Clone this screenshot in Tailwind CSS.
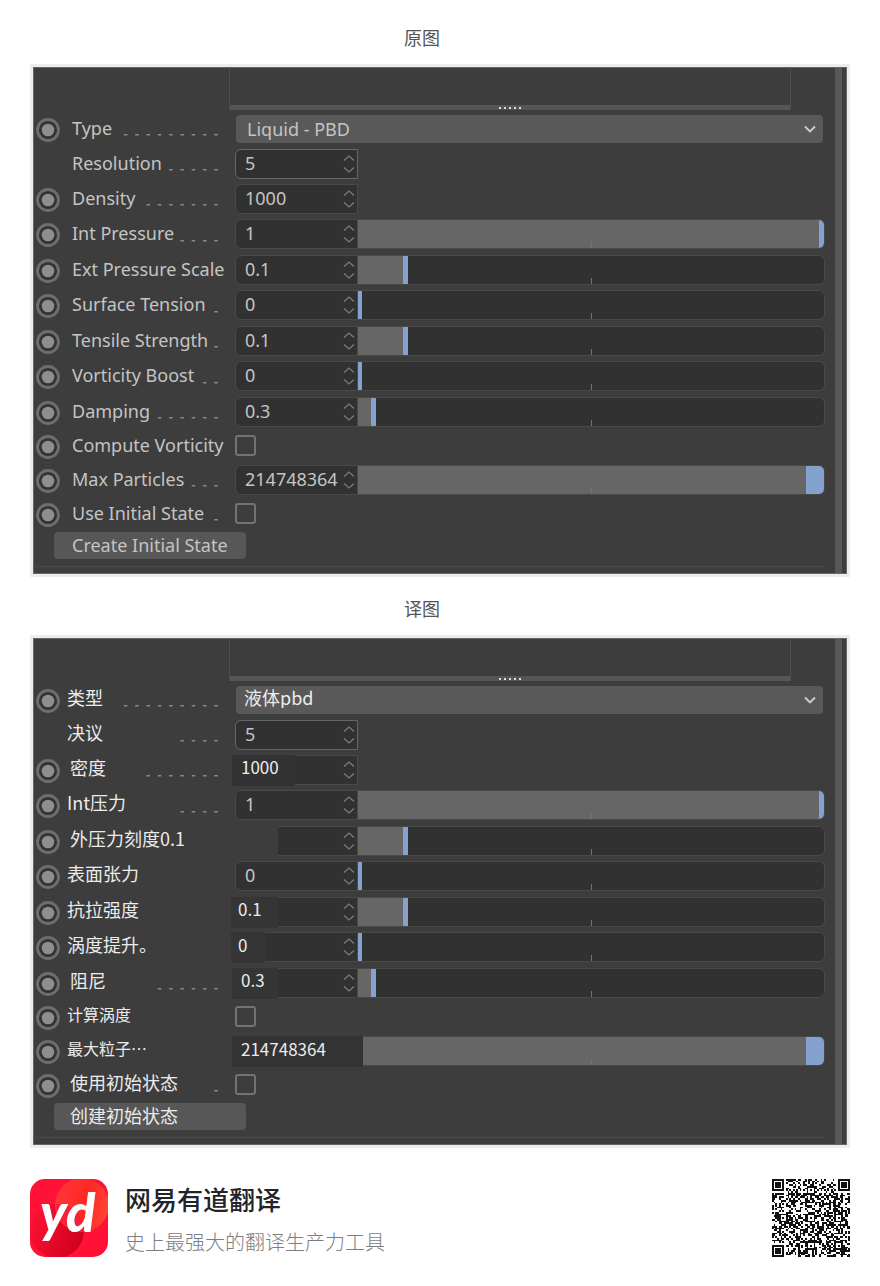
<!DOCTYPE html>
<html lang="zh-CN">
<head>
<meta charset="utf-8">
<meta name="viewport" content="width=device-width, initial-scale=1">
<title>网易有道翻译</title>
<script src="https://cdn.jsdelivr.net/npm/@tailwindcss/browser@4"></script>
</head>
<body class="bg-white pt-[6px] font-['Noto_Sans','Noto_Sans_CJK_SC',sans-serif]">
<main class="px-[30px]">
  <section>
    <h2 class="flex h-[58px] items-center justify-center pt-1 pr-9 font-['Noto_Sans_CJK_SC',sans-serif] text-lg text-[#555]">原图</h2>
    <div id="source"></div>
  </section>
  <section>
    <h2 class="flex h-[58px] items-center justify-center pt-1 pr-9 font-['Noto_Sans_CJK_SC',sans-serif] text-lg text-[#555]">译图</h2>
    <div id="translated"></div>
  </section>
</main>
<footer class="flex items-center px-[30px] py-[30px] font-['Noto_Sans_CJK_SC',sans-serif]">
  <svg class="size-[78px] shrink-0" viewBox="0 0 78 78" role="img" aria-label="yd">
    <defs>
      <clipPath id="tile"><rect width="78" height="78" rx="15"/></clipPath>
      <linearGradient id="warm" x1="0" y1="0.3" x2="1" y2="0.5"><stop offset="0" stop-color="#ff3a3c"/><stop offset="0.6" stop-color="#ff2a20"/><stop offset="1" stop-color="#ff4a36"/></linearGradient>
      <linearGradient id="deep" x1="0" y1="0.2" x2="1" y2="0.7"><stop offset="0" stop-color="#ff1236"/><stop offset="1" stop-color="#cf001e"/></linearGradient>
    </defs>
    <g clip-path="url(#tile)">
      <rect width="78" height="78" fill="#ff1236"/>
      <circle cx="27" cy="52" r="27" fill="url(#deep)"/>
      <circle cx="52" cy="26" r="27" fill="url(#warm)" fill-opacity="0.9"/>
      <path d="M26 25.100A27 27 0 0 1 54 52A27 27 0 0 1 26 25.100Z" fill="#f5203a"/>
    </g>
    <text x="10" y="53" font-family="Lato, sans-serif" font-weight="900" font-style="italic" font-size="54" fill="#fff">yd</text>
  </svg>
  <div class="ml-[17px] flex flex-1 flex-col gap-[11px] pt-[5px]">
    <p class="text-[26px] leading-8 font-medium text-[#222429]">网易有道翻译</p>
    <p class="text-xl leading-8 font-light text-[#7c7e82]">史上最强大的翻译生产力工具</p>
  </div>
  <svg id="qr" class="size-[78px] shrink-0" viewBox="0 0 45 45" shape-rendering="crispEdges" role="img" aria-label="QR"></svg>
</footer>

<script>
const latin = "font-['Noto_Sans',sans-serif] text-lg text-[#c4c4c4]";
const cjk = "font-['Noto_Sans_CJK_SC',sans-serif] text-lg text-[#ececec]";
const cjkValue = "font-['Noto_Sans_CJK_SC',sans-serif] text-[17px] text-[#ececec]";

// Row: label, leader dots, kind, value, slider fill %, handle width
const source = [
  { t: 'Type', d: 9, k: 'select', v: 'Liquid - PBD', h: 'h-[34px]' },
  { t: 'Resolution', d: 5, k: 'num', v: '5', h: 'h-[35px]', focus: true, noKey: true },
  { t: 'Density', d: 7, k: 'num', v: '1000', h: 'h-[35px]' },
  { t: 'Int Pressure', d: 4, k: 'slide', v: '1', f: 99, w: 5, h: 'h-[36px]' },
  { t: 'Ext Pressure Scale', d: 0, k: 'slide', v: '0.1', f: 9.6, w: 5, h: 'h-[35px]' },
  { t: 'Surface Tension', d: 1, k: 'slide', v: '0', f: 0, w: 4, h: 'h-[36px]' },
  { t: 'Tensile Strength', d: 1, k: 'slide', v: '0.1', f: 9.6, w: 5, h: 'h-[35px]' },
  { t: 'Vorticity Boost', d: 2, k: 'slide', v: '0', f: 0, w: 4, h: 'h-[36px]' },
  { t: 'Damping', d: 6, k: 'slide', v: '0.3', f: 2.7, w: 5, h: 'h-[35px]' },
  { t: 'Compute Vorticity', d: 0, k: 'check', h: 'h-[34px]' },
  { t: 'Max Particles', d: 3, k: 'slide', v: '214748364', f: 96.1, w: 18, h: 'h-[34px]' },
  { t: 'Use Initial State', d: 1, k: 'check', h: 'h-[34px]' },
  { t: 'Create Initial State', k: 'button' }
];
const changes = [
  { t: '类型', v: '液体pbd', cv: true },
  { t: '决议', d: 4 },
  { t: '密度', in: true, cv: true, patch: 'left-[-4px] w-[63px] bg-[#323232]' },
  { t: 'Int压力' },
  { t: '外压力刻度0.1', in: true, v: '', patch: 'left-[-4px] w-[46px] bg-[#3d3d3d]' },
  { t: '表面张力', d: 0 },
  { t: '抗拉强度', d: 0, cv: true, near: true, patch: 'left-[-5px] w-[47px] bg-[#353535]' },
  { t: '涡度提升。', d: 0, cv: true, near: true, patch: 'left-[-5px] w-[34px] bg-[#353535]' },
  { t: '阻尼', in: true, cv: true, patch: 'left-[-4px] w-[46px] bg-[#353535]' },
  { t: '计算涡度', small: true },
  { t: '最大粒子…', d: 0, small: true, cv: true, patch: 'left-[-4px] w-[131px] bg-[#333333]', noSpin: true },
  { t: '使用初始状态', in: true },
  { t: '创建初始状态', in: true }
];
const translated = source.map((r, i) => ({ ...r, zh: true, ...changes[i] }));

const ring = `<svg class="size-6 shrink-0" viewBox="0 0 24 24" aria-hidden="true"><circle cx="12" cy="12" r="10.500" fill="#333" stroke="#6e6e6e" stroke-width="2.800"/><circle cx="12" cy="12" r="6.300" fill="#8e8e8e"/></svg>`;
const spin = `<svg class="absolute top-[5px] right-[2px] h-[18px] w-3" viewBox="0 0 12 18" fill="none" stroke="#7c7c7c" stroke-width="1.300" aria-hidden="true"><path d="M1 5.500L6 1L11 5.500M1 12.500L6 17L11 12.500"/></svg>`;
const leader = n => {
  let s = '';
  for (let i = 0; i < n; i++) s += `<rect x="${(98.3 - i * 11.3).toFixed(1)}" y="0" width="3.500" height="1.500"/>`;
  return `<svg class="absolute right-[17px] bottom-[10px] h-[2px] w-[102px]" viewBox="0 0 102 2" fill="#8a8a8a" aria-hidden="true">${s}</svg>`;
};

function row(r, id) {
  const labelFont = r.zh ? (r.small ? "font-['Noto_Sans_CJK_SC',sans-serif] text-base text-[#ececec]" : cjk) : latin;
  const valueFont = r.cv ? (r.k === 'select' ? cjk : cjkValue) : latin;
  if (r.k === 'button') {
    return `<div class="flex h-[29px] items-center pl-[21px]"><button type="button" class="h-[27px] w-[192px] rounded bg-[#575757] text-left ${r.zh ? 'pb-2 pl-4' : 'pb-[2px] pl-[18px]'} leading-6 whitespace-nowrap ${labelFont}">${r.t}</button></div>`;
  }
  const indent = r.zh ? (r.in ? 'pl-[10px]' : 'pl-[7px]') : 'pl-3';
  let out = `<div class="flex ${r.h} items-center"><div class="relative flex h-full w-[202px] shrink-0 items-center pl-[3px]">
    <span class="flex w-6 shrink-0 pt-[2px]">${r.noKey ? '' : ring}</span>
    <label for="${id}" class="${indent} ${r.zh ? 'pb-[6px]' : 'pb-[2px]'} leading-6 whitespace-nowrap ${labelFont}">${r.t}</label>${leader(r.d)}</div>`;
  if (r.k === 'select') {
    out += `<div class="relative ml-px mr-[2px] h-7 flex-1"><select id="${id}" class="block h-full w-full appearance-none rounded bg-[#595959] ${r.cv ? 'pb-[6px] pl-2 leading-[22px]' : 'pb-[2px] pl-[11px]'} ${valueFont}"><option>${r.v}</option></select>
      <svg class="pointer-events-none absolute top-[10px] right-[7px] h-2 w-3" viewBox="0 0 12 8" fill="none" stroke="#d0d0d0" stroke-width="1.800" aria-hidden="true"><path d="M1 1.500L6 6.500L11 1.500"/></svg></div>`;
  } else if (r.k === 'check') {
    out += `<input id="${id}" type="checkbox" class="mb-px size-[21px] appearance-none rounded-[3px] border-2 border-[#737373]">`;
  } else {
    out += `<div class="relative h-[30px] w-[123px] shrink-0 rounded-l-md border ${r.noSpin ? 'z-10' : ''} ${r.focus ? 'border-[#666]' : 'border-[#494949]'} bg-[#313131]">
      ${r.patch ? `<span class="absolute -top-px h-[31px] ${r.patch}"></span>` : ''}
      <input id="${id}" type="text" inputmode="decimal" value="${r.v}" class="absolute inset-y-0 w-[104px] bg-transparent ${r.cv ? (r.near ? 'left-[2px] pb-[5px]' : 'left-[5px] pb-[5px]') : 'left-[9px] pb-[2px]'} ${valueFont}">${r.noSpin ? '' : spin}</div>`;
  }
  if (r.k === 'slide') {
    out += `<div class="relative flex h-[30px] flex-1 overflow-hidden rounded-r-md border border-l-0 border-[#494949] bg-[#313131]">
      <span class="bg-[#666]" style="width:${r.f}%"></span><span class="shrink-0 bg-[#85a2cf]" style="width:${r.w}px"></span>
      <span class="absolute bottom-0 left-1/2 h-[6px] w-px bg-[#66758d]"></span>
      <input type="range" aria-label="${r.t}" min="0" max="100" value="${r.f}" class="absolute inset-0 h-full w-full opacity-0"></div>`;
  }
  return out + '</div>';
}

function panel(target, rows) {
  document.getElementById(target).innerHTML = `<div class="border-3 border-[#ededed]"><div class="flex bg-[#3d3d3d] shadow-[inset_0_0_0_1px_#676767]">
    <div class="min-w-0 flex-1 pr-[10px] pb-[7px]">
      <div class="mr-[34px] mb-[2px] ml-[196px] flex h-[43px] items-end border-x border-[#4e4e4e]">
        <div class="flex h-[5px] w-full items-center justify-center gap-[3px] bg-[#555]">${'<i class="size-[2px] bg-[#ddd]"></i>'.repeat(5)}</div>
      </div>
      <form>${rows.map((r, i) => row(r, target + '-' + i)).join('')}</form>
      <hr class="mt-[6px] border-[#4b4b4b]">
    </div>
    <div class="w-3 shrink-0 py-px pr-[5px]"><div class="h-full bg-[#575757]"></div></div>
  </div></div>`;
}
panel('source', source);
panel('translated', translated);

// Version 7 code: finder, alignment and timing marks around a data field
(function () {
  const n = 45; let seed = 20731, d = '';
  const rand = () => (seed = (seed * 1103515245 + 12345) % 2147483648) / 2147483648;
  const mark = (x, y, cx, cy, r) => {
    const m = Math.max(Math.abs(x - cx), Math.abs(y - cy));
    return m > r ? null : r === 4 ? (m === 3 || m < 2) : (m === 2 || m === 0);
  };
  const marks = [[3,3,4],[41,3,4],[3,41,4],[22,22,2],[38,38,2],[22,6,2],[6,22,2],[38,22,2],[22,38,2]];
  for (let y = 0; y < n; y++) for (let x = 0; x < n; x++) {
    let on = rand() < 0.5;
    if (x === 6 || y === 6) on = (x + y) % 2 === 0;
    for (const [cx, cy, r] of marks) { const v = mark(x, y, cx, cy, r); if (v !== null) { on = v; break; } }
    if (on) d += `M${x} ${y}h1v1h-1z`;
  }
  document.getElementById('qr').innerHTML = `<path d="${d}" fill="#111"/>`;
})();
</script>
</body>
</html>
